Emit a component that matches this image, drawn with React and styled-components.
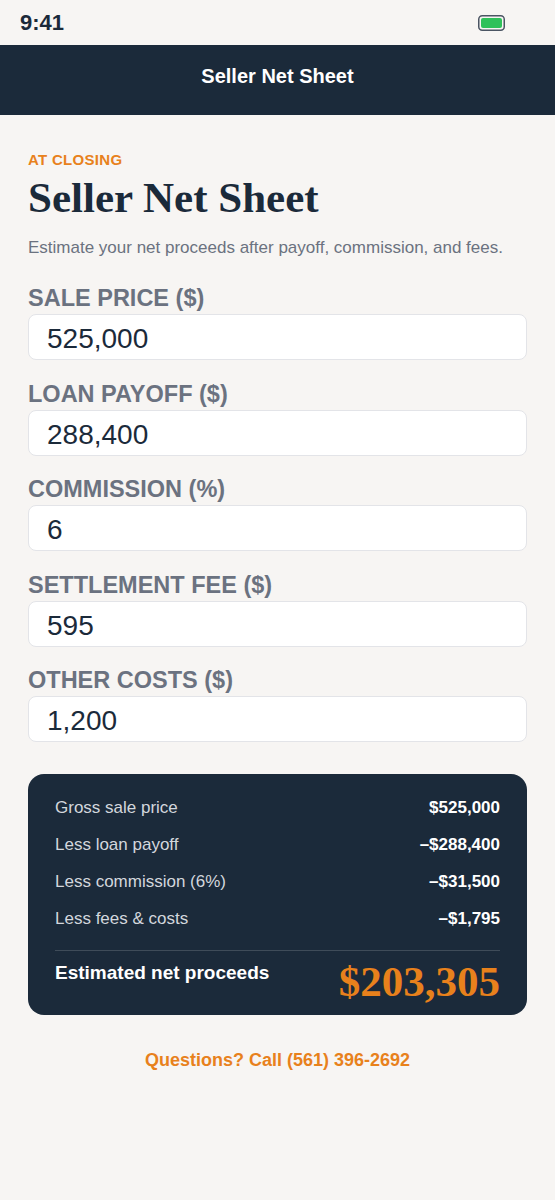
import React from 'react';
import styled, { createGlobalStyle } from 'styled-components';

const ORANGE = '#e8811c';
const NAVY = '#1b2a3a';

const GlobalStyle = createGlobalStyle`
    body {
        margin: 0;
        background: #f7f5f3;
        font-family: "Liberation Sans", Arial, sans-serif;
    }
`;

const Page = styled.div`
    width: 555px;
    min-height: 1200px;
    background: #f7f5f3;
`;

const StatusBar = styled.div`
    height: 45px;
    display: flex;
    align-items: center;
    justify-content: space-between;
    padding: 0 50px 0 20px;
    box-sizing: border-box;
`;

const Clock = styled.span`
    font-size: 22px;
    font-weight: 700;
    color: ${NAVY};
`;

const Header = styled.header`
    height: 70px;
    box-sizing: border-box;
    padding-bottom: 8px;
    background: ${NAVY};
    display: flex;
    align-items: center;
    justify-content: center;
    color: #fff;
    font-size: 20px;
    font-weight: 700;
`;

const Content = styled.main`
    padding: 36px 28px 0;
`;

const Eyebrow = styled.div`
    color: ${ORANGE};
    font-size: 15px;
    font-weight: 700;
    letter-spacing: 0.3px;
`;

const Title = styled.h1`
    margin: 8px 0 0;
    font-family: "Liberation Serif", "Times New Roman", serif;
    font-size: 43px;
    font-weight: 700;
    color: ${NAVY};
    line-height: 44px;
`;

const Lead = styled.p`
    margin: 18px 0 0;
    font-size: 17px;
    color: #6b7280;
`;

const Fields = styled.div`
    display: flex;
    flex-direction: column;
    gap: 20.5px;
    margin-top: 27px;
`;

const Field = styled.label`
    display: flex;
    flex-direction: column;
    gap: 3px;
`;

const FieldLabel = styled.span`
    font-size: 23.5px;
    line-height: 26px;
    font-weight: 700;
    color: #6b7280;
`;

const Input = styled.input`
    height: 46px;
    box-sizing: border-box;
    border: 1px solid #e3e4e8;
    border-radius: 8px;
    background: #fff;
    padding: 4px 18px 0;
    font-family: "Liberation Sans", Arial, sans-serif;
    font-size: 28px;
    color: ${NAVY};
    outline: none;
`;

const Summary = styled.section`
    margin-top: 32px;
    background: ${NAVY};
    border-radius: 16px;
    padding: 15px 27px 12px;
`;

const Row = styled.div`
    display: flex;
    justify-content: space-between;
    align-items: center;
    height: 37px;
    font-size: 17px;
`;

const RowLabel = styled.span`
    color: #d3d7dd;
`;

const RowValue = styled.span`
    color: #fff;
    font-weight: 700;
`;

const Divider = styled.div`
    height: 1px;
    background: rgba(255, 255, 255, 0.16);
    margin: 13px 0 0;
`;

const TotalRow = styled.div`
    display: flex;
    justify-content: space-between;
    align-items: flex-start;
    padding-top: 10px;
`;

const TotalLabel = styled.span`
    color: #fff;
    font-size: 19px;
    font-weight: 700;
    margin-top: 1px;
`;

const TotalValue = styled.span`
    color: ${ORANGE};
    font-family: "Liberation Serif", "Times New Roman", serif;
    font-size: 43px;
    font-weight: 700;
    line-height: 42px;
`;

const Footer = styled.div`
    text-align: center;
    margin-top: 35px;
    color: ${ORANGE};
    font-size: 18px;
    font-weight: 700;
`;

const Battery = () => (
    <svg width="27" height="16" viewBox="0 0 27 16">
        <rect x="0.75" y="0.75" width="25.5" height="14.5" rx="3.5" fill="none" stroke="#4b5563" strokeWidth="1.5" />
        <rect x="3" y="3" width="21" height="10" rx="2" fill="#2fc15a" />
    </svg>
);

const fields = [
    ['SALE PRICE ($)', '525,000'],
    ['LOAN PAYOFF ($)', '288,400'],
    ['COMMISSION (%)', '6'],
    ['SETTLEMENT FEE ($)', '595'],
    ['OTHER COSTS ($)', '1,200'],
];

const rows = [
    ['Gross sale price', '$525,000'],
    ['Less loan payoff', '–$288,400'],
    ['Less commission (6%)', '–$31,500'],
    ['Less fees & costs', '–$1,795'],
];

export default function App() {
    return (
        <Page>
            <GlobalStyle />
            <StatusBar>
                <Clock>9:41</Clock>
                <Battery />
            </StatusBar>
            <Header>Seller Net Sheet</Header>
            <Content>
                <Eyebrow>AT CLOSING</Eyebrow>
                <Title>Seller Net Sheet</Title>
                <Lead>Estimate your net proceeds after payoff, commission, and fees.</Lead>
                <Fields>
                    {fields.map(([label, value]) => (
                        <Field key={label}>
                            <FieldLabel>{label}</FieldLabel>
                            <Input defaultValue={value} />
                        </Field>
                    ))}
                </Fields>
                <Summary>
                    {rows.map(([label, value]) => (
                        <Row key={label}>
                            <RowLabel>{label}</RowLabel>
                            <RowValue>{value}</RowValue>
                        </Row>
                    ))}
                    <Divider />
                    <TotalRow>
                        <TotalLabel>Estimated net proceeds</TotalLabel>
                        <TotalValue>$203,305</TotalValue>
                    </TotalRow>
                </Summary>
                <Footer>Questions? Call (561) 396-2692</Footer>
            </Content>
        </Page>
    );
}
